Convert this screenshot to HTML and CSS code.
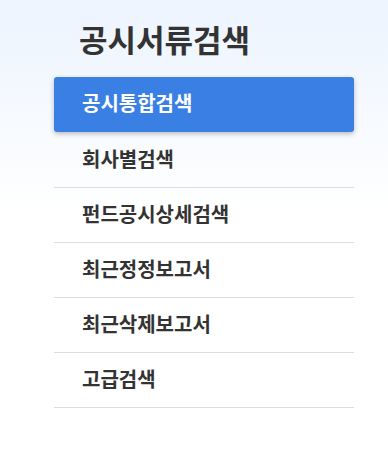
FILE: index.html
```html
<!DOCTYPE html>
<html lang="ko">
<head>
  <meta charset="UTF-8" />
  <title>공시서류검색</title>
  <link rel="stylesheet" href="styles.css">
</head>
<body>
  <nav class="side-menu">
    <h2 class="menu-title">공시서류검색</h2>
    <ul class="menu-list">
      <li class="menu-item active"><a href="#">공시통합검색</a></li>
      <li class="menu-item"><a href="#">회사별검색</a></li>
      <li class="menu-item"><a href="#">펀드공시상세검색</a></li>
      <li class="menu-item"><a href="#">최근정정보고서</a></li>
      <li class="menu-item"><a href="#">최근삭제보고서</a></li>
      <li class="menu-item"><a href="#">고급검색</a></li>
    </ul>
  </nav>
</body>
</html>
```

FILE: styles.css
```css
html, body {
  height: 100%;
}
body {
  margin: 0;
  font-family: "Noto Sans CJK KR", "Noto Sans", sans-serif;
  background: linear-gradient(to bottom, #ecf4fe 0%, #ffffff 45%);
  color: #333;
}
.side-menu {
  width: 300px;
  margin-left: 54px;
  padding-top: 16px;
}
.menu-title {
  margin: 0 0 16px 0;
  padding-left: 25px;
  font-size: 31px;
  font-weight: bold;
  line-height: 45px;
  color: #333;
}
.menu-list {
  list-style: none;
  margin: 0;
  padding: 0;
}
.menu-item {
  border-bottom: 1px solid #dddddd;
}
.menu-item a {
  display: block;
  padding-left: 28px;
  height: 54px;
  line-height: 52px;
  font-size: 20px;
  font-weight: bold;
  color: #333;
  text-decoration: none;
}
.menu-item.active {
  border-bottom: none;
  margin-bottom: 1px;
  background: #3a7fe3;
  border-radius: 3px;
  box-shadow: 0 2px 5px rgba(0, 0, 0, 0.25);
}
.menu-item.active a {
  height: 55px;
  line-height: 52px;
  color: #fff;
}
```
